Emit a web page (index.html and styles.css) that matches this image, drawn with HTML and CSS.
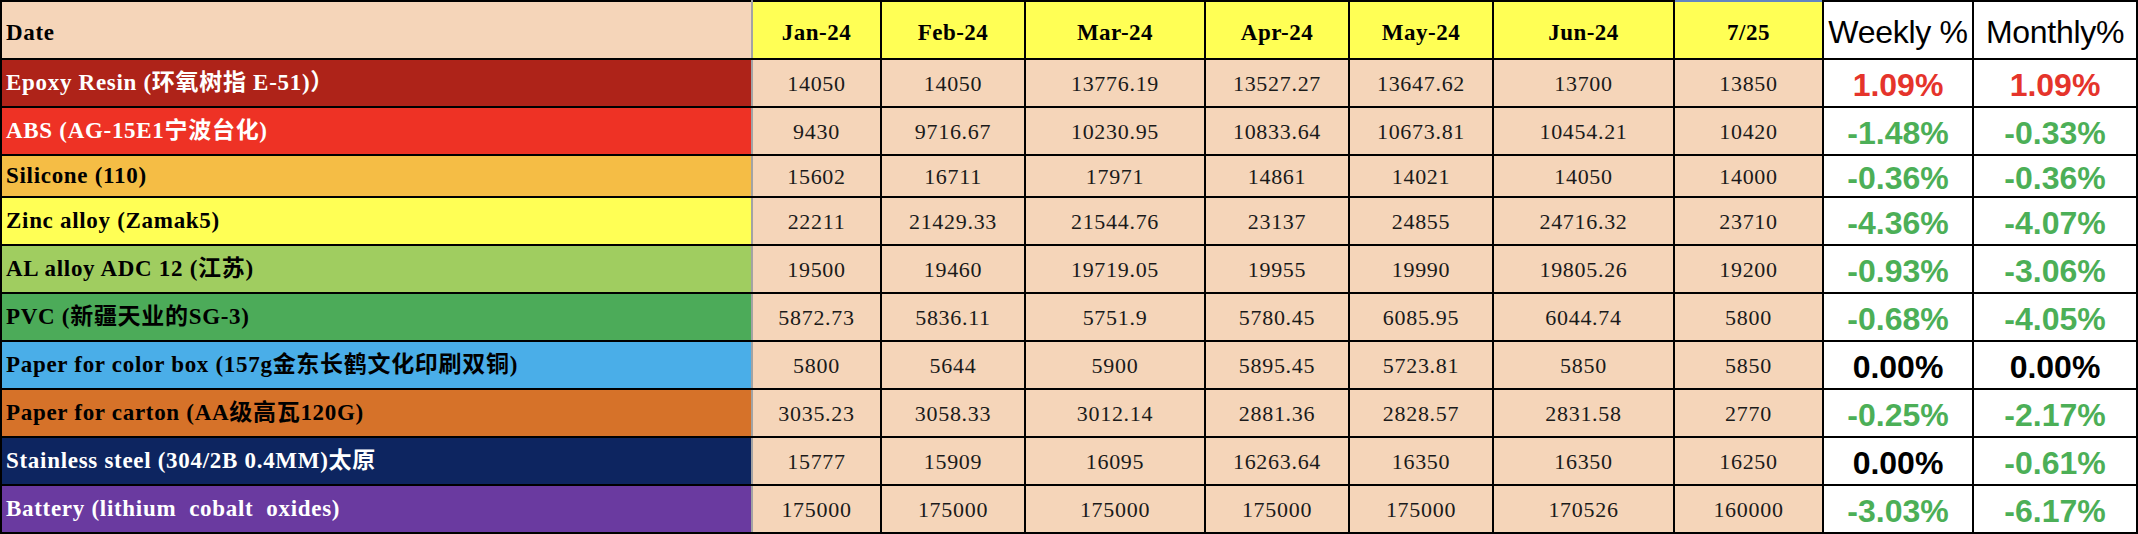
FILE: index.html
```html
<!DOCTYPE html>
<html lang="en">
<head>
<meta charset="utf-8">
<title>Raw material prices</title>
<link rel="stylesheet" href="styles.css">
</head>
<body>
<table class="prices">
  <colgroup>
    <col class="c-label"><col class="c-jan"><col class="c-m"><col class="c-mar"><col class="c-m"><col class="c-m"><col class="c-jun"><col class="c-now"><col class="c-wk"><col class="c-mo">
  </colgroup>
  <thead>
    <tr class="head">
      <th class="label">Date</th>
      <th class="month">Jan-24</th>
      <th class="month">Feb-24</th>
      <th class="month">Mar-24</th>
      <th class="month">Apr-24</th>
      <th class="month">May-24</th>
      <th class="month">Jun-24</th>
      <th class="month sel">7/25</th>
      <th class="pcth">Weekly %</th>
      <th class="pcth">Monthly%</th>
    </tr>
  </thead>
  <tbody>
    <tr>
      <td class="label epoxy">Epoxy Resin (环氧树指 E-51)）</td>
      <td class="num">14050</td><td class="num">14050</td><td class="num">13776.19</td><td class="num">13527.27</td><td class="num">13647.62</td><td class="num">13700</td><td class="num">13850</td>
      <td class="pc up">1.09%</td><td class="pc up">1.09%</td>
    </tr>
    <tr>
      <td class="label abs">ABS (AG-15E1宁波台化)</td>
      <td class="num">9430</td><td class="num">9716.67</td><td class="num">10230.95</td><td class="num">10833.64</td><td class="num">10673.81</td><td class="num">10454.21</td><td class="num">10420</td>
      <td class="pc down">-1.48%</td><td class="pc down">-0.33%</td>
    </tr>
    <tr class="short">
      <td class="label silicone">Silicone (110)</td>
      <td class="num">15602</td><td class="num">16711</td><td class="num">17971</td><td class="num">14861</td><td class="num">14021</td><td class="num">14050</td><td class="num">14000</td>
      <td class="pc down">-0.36%</td><td class="pc down">-0.36%</td>
    </tr>
    <tr>
      <td class="label zinc">Zinc alloy (Zamak5)</td>
      <td class="num">22211</td><td class="num">21429.33</td><td class="num">21544.76</td><td class="num">23137</td><td class="num">24855</td><td class="num">24716.32</td><td class="num">23710</td>
      <td class="pc down">-4.36%</td><td class="pc down">-4.07%</td>
    </tr>
    <tr>
      <td class="label al">AL alloy ADC 12 (江苏)</td>
      <td class="num">19500</td><td class="num">19460</td><td class="num">19719.05</td><td class="num">19955</td><td class="num">19990</td><td class="num">19805.26</td><td class="num">19200</td>
      <td class="pc down">-0.93%</td><td class="pc down">-3.06%</td>
    </tr>
    <tr>
      <td class="label pvc">PVC (新疆天业的SG-3)</td>
      <td class="num">5872.73</td><td class="num">5836.11</td><td class="num">5751.9</td><td class="num">5780.45</td><td class="num">6085.95</td><td class="num">6044.74</td><td class="num">5800</td>
      <td class="pc down">-0.68%</td><td class="pc down">-4.05%</td>
    </tr>
    <tr>
      <td class="label colorbox">Paper for color box (157g金东长鹤文化印刷双铜)</td>
      <td class="num">5800</td><td class="num">5644</td><td class="num">5900</td><td class="num">5895.45</td><td class="num">5723.81</td><td class="num">5850</td><td class="num">5850</td>
      <td class="pc flat">0.00%</td><td class="pc flat">0.00%</td>
    </tr>
    <tr>
      <td class="label carton">Paper for carton (AA级高瓦120G)</td>
      <td class="num">3035.23</td><td class="num">3058.33</td><td class="num">3012.14</td><td class="num">2881.36</td><td class="num">2828.57</td><td class="num">2831.58</td><td class="num">2770</td>
      <td class="pc down">-0.25%</td><td class="pc down">-2.17%</td>
    </tr>
    <tr>
      <td class="label steel">Stainless steel (304/2B 0.4MM)太原</td>
      <td class="num">15777</td><td class="num">15909</td><td class="num">16095</td><td class="num">16263.64</td><td class="num">16350</td><td class="num">16350</td><td class="num">16250</td>
      <td class="pc flat">0.00%</td><td class="pc down">-0.61%</td>
    </tr>
    <tr>
      <td class="label battery">Battery (lithium&nbsp; cobalt&nbsp; oxides)</td>
      <td class="num">175000</td><td class="num">175000</td><td class="num">175000</td><td class="num">175000</td><td class="num">175000</td><td class="num">170526</td><td class="num">160000</td>
      <td class="pc down">-3.03%</td><td class="pc down">-6.17%</td>
    </tr>
  </tbody>
</table>
</body>
</html>
```
FILE: styles.css
```css
html, body {
  margin: 0;
  padding: 0;
  background: #ffffff;
}

.prices {
  border-collapse: collapse;
  table-layout: fixed;
  width: 2136px;
  font-family: "Liberation Serif", "Noto Sans CJK SC", serif;
}

.c-label { width: 751px; }
.c-jan { width: 129px; }
.c-m { width: 144px; }
.c-mar { width: 180px; }
.c-jun { width: 181px; }
.c-now { width: 149px; }
.c-wk { width: 150px; }
.c-mo { width: 164px; }

.prices tr { height: 48px; }
.prices tr.head { height: 58px; }
.prices tr.short { height: 42px; }

.prices th,
.prices td {
  border: 2px solid #000;
  padding: 0;
  overflow: hidden;
  white-space: nowrap;
  line-height: 26px;
}

.label {
  text-align: left;
  padding-left: 4px !important;
  font-weight: bold;
  font-size: 23px;
  letter-spacing: 0.7px;
  color: #000;
  border-right-color: #a3a3a3 !important;
  font-family: "Liberation Serif", "Noto Sans CJK SC", serif;
}

th.label {
  background: #f5d5b9;
  padding-top: 6px !important;
}

.month {
  background: #ffff55;
  font-weight: bold;
  font-size: 23px;
  letter-spacing: 0.5px;
  color: #000;
  text-align: center;
  padding-top: 6px !important;
}

.month.sel {
  border-top-color: #6286c2;
}

.pcth {
  background: #fff;
  font-family: "Liberation Sans", Arial, sans-serif;
  font-weight: normal;
  font-size: 32px;
  color: #000;
  text-align: center;
  padding-top: 4px !important;
  letter-spacing: -0.3px;
}

.num {
  background: #f5d5b9;
  text-align: center;
  font-size: 22px;
  letter-spacing: 0.7px;
  color: #1a1a1a;
  padding-top: 2px !important;
}

.pc {
  background: #fff;
  text-align: center;
  font-family: "Liberation Sans", Arial, sans-serif;
  font-weight: bold;
  font-size: 32px;
  padding-top: 4px !important;
}

.pc.up { color: #e5342b; }
.pc.down { color: #4caf57; }
.pc.flat { color: #000; }

.epoxy { background: #ae2319; color: #fff; }
.abs { background: #ee3225; color: #fff; }
.silicone { background: #f5bd45; }
.zinc { background: #ffff55; }
.al { background: #a0cd60; }
.pvc { background: #4cab59; }
.colorbox { background: #4aaee8; }
.carton { background: #d67229; }
.steel { background: #0d2560; color: #fff; }
.battery { background: #6a3aa0; color: #fff; }
```
